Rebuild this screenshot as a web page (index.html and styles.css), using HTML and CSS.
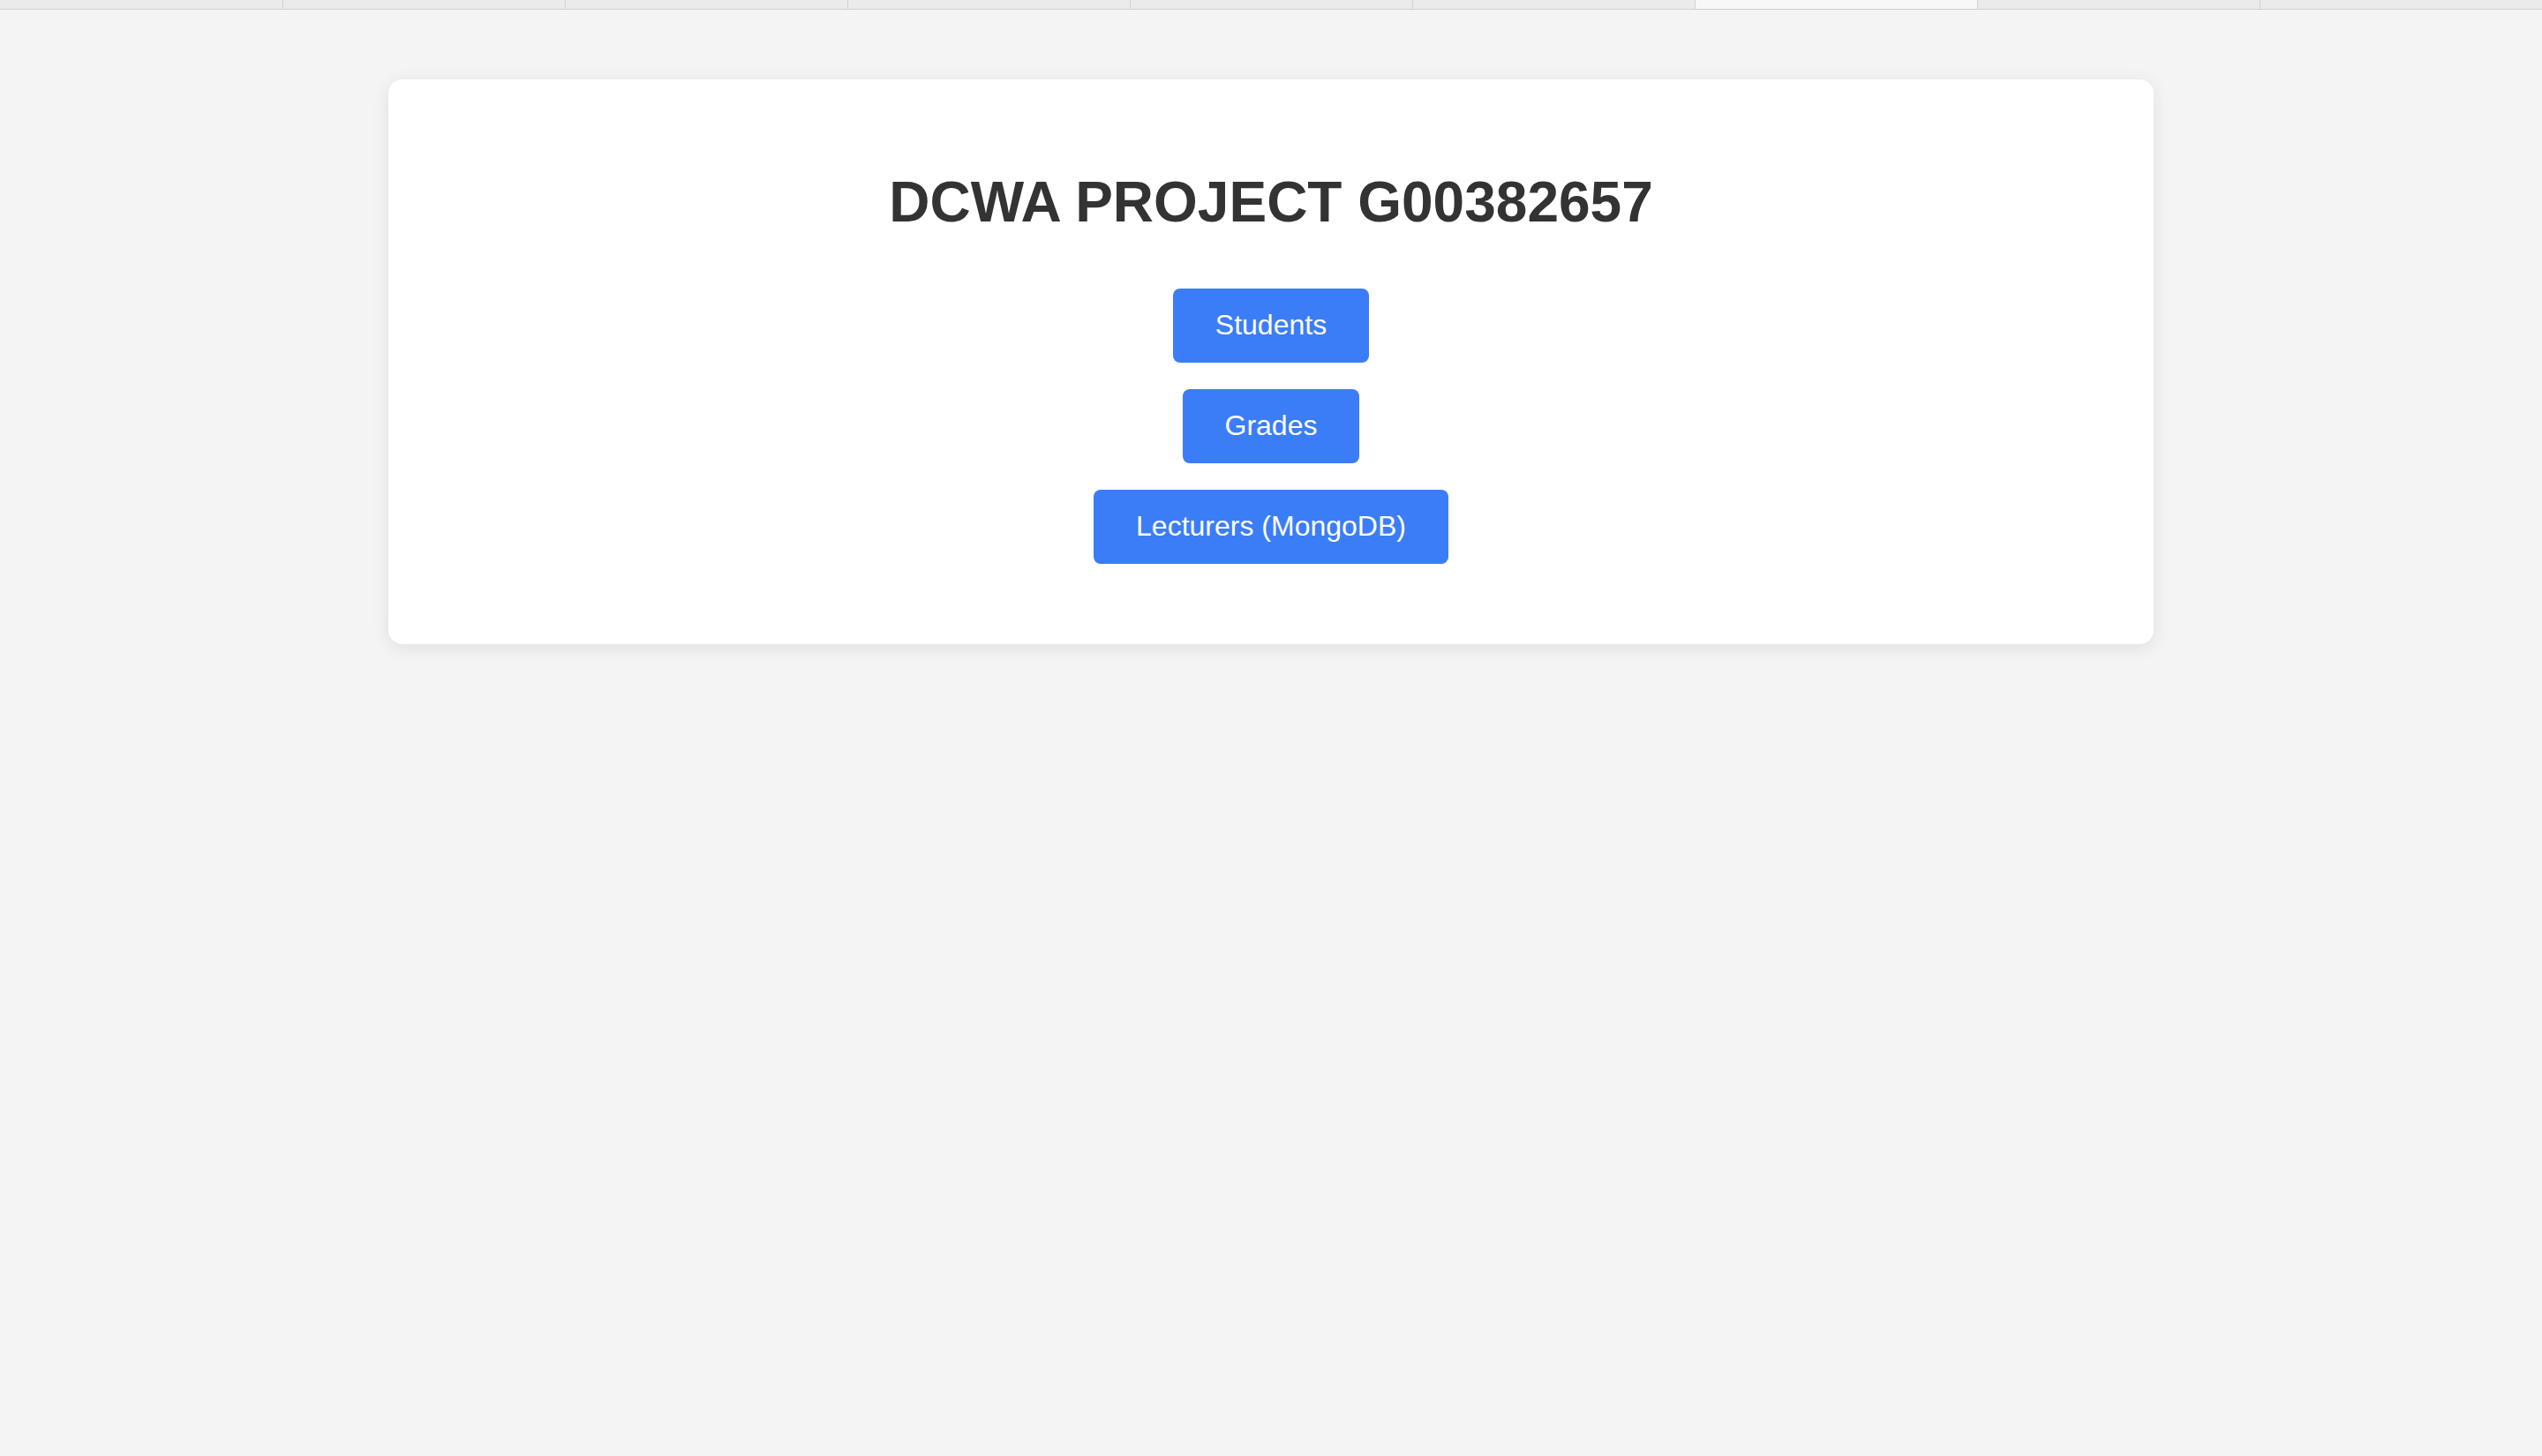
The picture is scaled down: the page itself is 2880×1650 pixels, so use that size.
FILE: index.html
```html
<!DOCTYPE html>
<html>
<head>
<meta charset="utf-8">
<title>DCWA PROJECT</title>
<link rel="stylesheet" href="styles.css">
</head>
<body>
<div class="tabbar">
  <div class="tab first"></div>
  <div class="tab"></div>
  <div class="tab"></div>
  <div class="tab"></div>
  <div class="tab"></div>
  <div class="tab"></div>
  <div class="tab active"></div>
  <div class="tab"></div>
  <div class="tab last"></div>
</div>
<main class="page">
  <section class="card">
    <h1 class="title">DCWA PROJECT G00382657</h1>
    <nav class="links">
      <a class="btn" href="#">Students</a>
      <a class="btn" href="#">Grades</a>
      <a class="btn" href="#">Lecturers (MongoDB)</a>
    </nav>
  </section>
</main>
</body>
</html>
```

FILE: styles.css
```css
html, body {
  margin: 0;
  padding: 0;
}
body {
  background: #f4f4f4;
  font-family: "Liberation Sans", Arial, Helvetica, sans-serif;
  min-height: 1650px;
}
.tabbar {
  display: flex;
  height: 10px;
  border-bottom: 1px solid #cfcfcf;
  background: #ebebeb;
}
.tab {
  flex: 0 0 320px;
  box-sizing: border-box;
  border-left: 1px solid #d2d2d2;
  background: #ebebeb;
}
.tab.first {
  border-left: none;
}
.tab.active {
  background: #f8f8f8;
}
.tab.last {
  flex: 1 1 auto;
}
.page {
  padding-top: 79px;
  display: flex;
  justify-content: center;
}
.card {
  width: 2000px;
  box-sizing: border-box;
  background: #ffffff;
  border-radius: 16px;
  box-shadow: 0 4px 20px rgba(0, 0, 0, 0.09);
  padding: 102px 40px 91px;
  display: flex;
  flex-direction: column;
  align-items: center;
}
.title {
  margin: 0 0 61px;
  font-size: 64px;
  line-height: 74px;
  font-weight: bold;
  color: #333333;
  text-align: center;
}
.links {
  display: flex;
  flex-direction: column;
  align-items: center;
  gap: 30px;
}
.btn {
  display: block;
  padding: 23px 48px 25px;
  font-size: 32px;
  line-height: 36px;
  color: #ffffff;
  background: #3b7df6;
  border-radius: 8px;
  text-decoration: none;
}
```
